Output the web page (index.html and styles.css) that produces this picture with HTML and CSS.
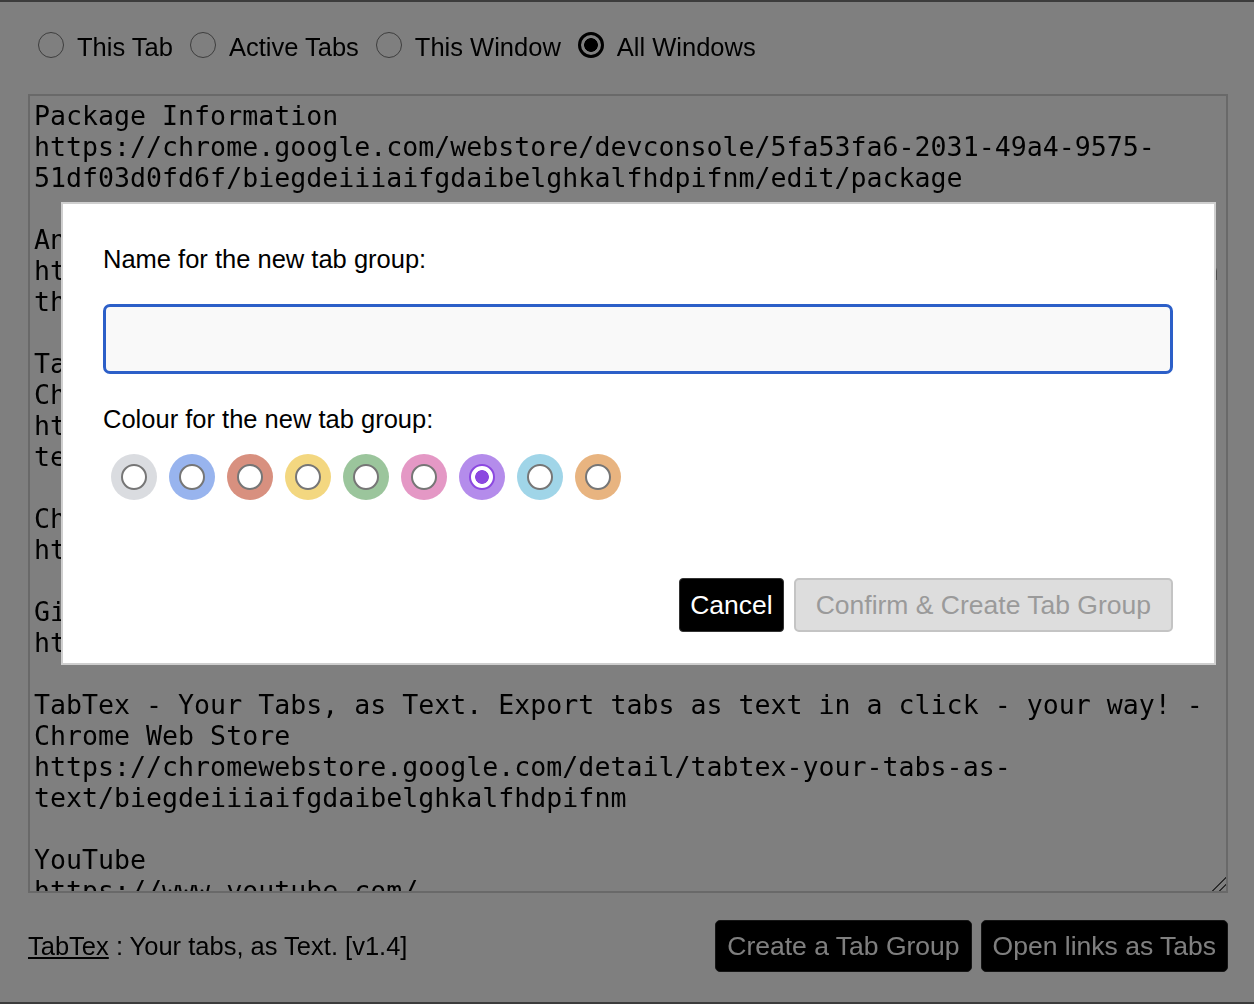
FILE: index.html
```html
<!DOCTYPE html>
<html lang="en">
<head>
<meta charset="utf-8">
<title>TabTex</title>
<link rel="stylesheet" href="styles.css">
</head>
<body>
<div class="page">
  <div class="scopes">
    <label class="scope"><input type="radio" name="scope" class="radio"><span class="scope-text">This Tab</span></label>
    <label class="scope"><input type="radio" name="scope" class="radio"><span class="scope-text">Active Tabs</span></label>
    <label class="scope"><input type="radio" name="scope" class="radio"><span class="scope-text">This Window</span></label>
    <label class="scope"><input type="radio" name="scope" class="radio" checked><span class="scope-text">All Windows</span></label>
  </div>
  <textarea class="output" spellcheck="false">Package Information
https://chrome.google.com/webstore/devconsole/5fa53fa6-2031-49a4-9575-
51df03d0fd6f/biegdeiiiaifgdaibelghkalfhdpifnm/edit/package

Analytics - Chrome Web Store Developer Dashboard
https://chrome.google.com/webstore/devconsole/5fa53fa6/analytics?view=main
thisweek&amp;metric=installs

TabTex - Your Tabs, as Text. Export tabs as text in a click - your way! -
Chrome Web Store
https://chromewebstore.google.com/detail/tabtex-your-tabs-as-
text/biegdeiiiaifgdaibelghkalfhdpifnm

Chrome Web Store - Extensions
https://chromewebstore.google.com/category/extensions

GitHub
https://github.com/

TabTex - Your Tabs, as Text. Export tabs as text in a click - your way! -
Chrome Web Store
https://chromewebstore.google.com/detail/tabtex-your-tabs-as-
text/biegdeiiiaifgdaibelghkalfhdpifnm

YouTube
https://www.youtube.com/

Google
https://www.google.com/</textarea>
  <div class="footer">
    <p class="credit"><a href="#" class="brand">TabTex</a> : Your tabs, as Text. [v1.4]</p>
    <div class="actions">
      <button class="btn btn-dark">Create a Tab Group</button>
      <button class="btn btn-dark">Open links as Tabs</button>
    </div>
  </div>
</div>

<div class="backdrop"></div>

<div class="dialog" role="dialog" aria-modal="true">
  <label class="field-label" for="group-name">Name for the new tab group:</label>
  <input id="group-name" class="name-input" type="text">
  <div class="field-label colour-label">Colour for the new tab group:</div>
  <div class="swatches">
    <span class="swatch sw-grey"><span class="dot"></span></span>
    <span class="swatch sw-blue"><span class="dot"></span></span>
    <span class="swatch sw-red"><span class="dot"></span></span>
    <span class="swatch sw-yellow"><span class="dot"></span></span>
    <span class="swatch sw-green"><span class="dot"></span></span>
    <span class="swatch sw-pink"><span class="dot"></span></span>
    <span class="swatch sw-purple"><span class="dot dot-on"></span></span>
    <span class="swatch sw-cyan"><span class="dot"></span></span>
    <span class="swatch sw-orange"><span class="dot"></span></span>
  </div>
  <div class="dialog-actions">
    <button class="btn btn-cancel">Cancel</button>
    <button class="btn btn-confirm" disabled>Confirm &amp; Create Tab Group</button>
  </div>
</div>
</body>
</html>
```
FILE: styles.css
```css
* { box-sizing: border-box; }

html, body {
  margin: 0;
  padding: 0;
}

body {
  background: #ffffff;
  color: #000;
  font-family: "Liberation Sans", Arial, sans-serif;
  border-top: 2px solid #787878;
  border-bottom: 2px solid #787878;
  height: 1004px;
  overflow: hidden;
}

.page {
  padding: 30px 26px 0 28px;
}

.scopes {
  display: flex;
  align-items: center;
  height: 26px;
  font-size: 25.5px;
}

.scope {
  display: flex;
  align-items: center;
  margin-right: 7px;
}

.scope-text {
  padding-top: 5px;
}

.radio {
  appearance: none;
  -webkit-appearance: none;
  width: 26px;
  height: 26px;
  margin: 0 13px 0 10px;
  border-radius: 50%;
  border: 1.5px solid #7a7a7a;
  background: #fff;
}

.radio:checked {
  border: 3px solid #000;
  background: radial-gradient(circle, #000 0 6.5px, #fff 7.2px);
}

.output {
  display: block;
  width: 1200px;
  height: 799px;
  margin: 36px 0 0 0;
  padding: 4px;
  border: 2px solid #d2d2d2;
  border-radius: 0;
  font-family: "DejaVu Sans Mono", "Liberation Mono", monospace;
  font-size: 26.6px;
  line-height: 31px;
  color: #000;
  background: #fff;
  white-space: pre-wrap;
  outline: none;
}

.output::-webkit-resizer {
  background: linear-gradient(135deg, transparent 0 52%, #5a5a5a 52% 60%, transparent 60% 74%, #5a5a5a 74% 82%, transparent 82%);
}

.footer {
  display: flex;
  justify-content: space-between;
  align-items: center;
  margin-top: 27px;
  height: 52px;
}

.credit {
  margin: 0;
  font-size: 25.5px;
}

.brand {
  color: #000;
  text-decoration: underline;
}

.actions {
  display: flex;
  gap: 9px;
}

.btn {
  font-family: "Liberation Sans", Arial, sans-serif;
  font-size: 26.5px;
  cursor: pointer;
}

.btn-dark {
  height: 52px;
  padding: 0 11px;
  background: #000;
  color: #fff;
  border: 1px solid #2a2a2a;
  border-radius: 5px;
}

.backdrop {
  position: fixed;
  inset: 0;
  background: rgba(0, 0, 0, 0.5);
}

.dialog {
  position: fixed;
  left: 61px;
  top: 202px;
  width: 1155px;
  height: 463px;
  background: #fff;
  border: 2px solid #cfcfcf;
  padding: 40px 41px 31px 40px;
  display: flex;
  flex-direction: column;
}

.field-label {
  display: block;
  font-size: 25.5px;
  line-height: 30px;
  height: 30px;
}

.name-input {
  margin-top: 30px;
  height: 70px;
  width: 100%;
  border: 3px solid #2c5fc8;
  border-radius: 7px;
  background: #f9f9f9;
  outline: none;
  font-size: 25px;
  padding: 0 14px;
}

.colour-label {
  margin-top: 30px;
}

.swatches {
  display: flex;
  gap: 12px;
  margin-top: 20px;
  padding-left: 8px;
}

.swatch {
  width: 46px;
  height: 46px;
  border-radius: 50%;
  display: flex;
  align-items: center;
  justify-content: center;
}

.sw-grey { background: #dadce0; }
.sw-blue { background: #98b4ee; }
.sw-red { background: #d8907f; }
.sw-yellow { background: #f3d780; }
.sw-green { background: #9bc59c; }
.sw-pink { background: #e498c5; }
.sw-purple { background: #b48ceb; }
.sw-cyan { background: #a0d5e8; }
.sw-orange { background: #e8b480; }

.dot {
  width: 26px;
  height: 26px;
  border-radius: 50%;
  background: #fff;
  border: 2px solid #767676;
}

.dot-on {
  border: 2px solid #8b48e0;
  background: radial-gradient(circle, #8b48e0 0 6.5px, #fff 7.2px);
}

.dialog-actions {
  margin-top: auto;
  display: flex;
  justify-content: flex-end;
  gap: 10px;
}

.btn-cancel {
  height: 54px;
  padding: 0 10px;
  background: #000;
  color: #fff;
  border: 1px solid #333;
  border-radius: 4px;
}

.btn-confirm {
  height: 54px;
  padding: 0 20px;
  background: #dddddd;
  color: #9a9a9a;
  border: 2px solid #c4c4c4;
  border-radius: 5px;
}
```
